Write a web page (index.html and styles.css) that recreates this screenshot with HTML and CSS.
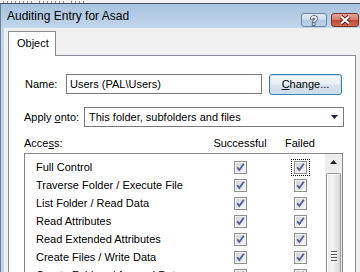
FILE: index.html
```html
<!DOCTYPE html>
<html>
<head>
<meta charset="utf-8">
<link rel="stylesheet" href="styles.css">
</head>
<body>
<svg class="defs" width="0" height="0">
  <defs>
    <linearGradient id="cbfill" x1="0" y1="0" x2="1" y2="1">
      <stop offset="0" stop-color="#d2d2d2"/>
      <stop offset="1" stop-color="#f7f7f7"/>
    </linearGradient>
    <symbol id="cb" viewBox="0 0 13 13">
      <rect x="0.5" y="0.5" width="12" height="12" fill="#f4f4f4" stroke="#8e8f8f"/>
      <rect x="2" y="2" width="9" height="9" fill="url(#cbfill)"/>
      <path d="M3.2 6.2 L5.3 9 L9.8 2.8" fill="none" stroke="#4a5ea0" stroke-width="1.8"/>
    </symbol>
  </defs>
</svg>
<div class="behind"><i class="m1"></i><i class="m2"></i><i class="m3"></i></div>
<div class="window">
  <div class="titlebar">
    <span class="title">Auditing Entry for Asad</span>
    <div class="caption-btns">
      <span class="cbtn help">
        <svg width="24" height="12" viewBox="0 0 24 12"><text x="12" y="10.5" text-anchor="middle" class="qmark">?</text></svg>
      </span>
      <span class="cbtn close">
        <svg width="26" height="12" viewBox="0 0 26 12">
          <path d="M9 2.5 L17 9.5 M17 2.5 L9 9.5" stroke="#5b1c12" stroke-width="4" fill="none"/>
          <path d="M9 2.5 L17 9.5 M17 2.5 L9 9.5" stroke="#fff" stroke-width="2.2" fill="none"/>
        </svg>
      </span>
    </div>
  </div>
  <div class="client">
    <div class="tabs"><div class="tab">Object</div><div class="tab-fill"></div></div>
    <div class="panel">
      <div class="name-row">
        <span class="lbl name-lbl">Name:</span>
        <div class="textbox">Users (PAL\Users)</div>
        <div class="btn"><span><u>C</u>hange...</span></div>
      </div>
      <div class="apply-row">
        <span class="lbl apply-lbl">Apply <u>o</u>nto:</span>
        <div class="combo">
          <span>This folder, subfolders and files</span>
          <svg width="7" height="4" viewBox="0 0 7 4"><path d="M0 0 H7 L3.5 4 Z" fill="#16284e"/></svg>
        </div>
      </div>
      <div class="perm-head">
        <span>Acce<u>s</u>s:</span>
        <span class="col">Successful</span>
        <span class="col">Failed</span>
      </div>
      <div class="list">
        <div class="rows">
          <div class="prow"><span>Full Control</span><span class="col"><svg class="cbx"><use href="#cb"/></svg></span><span class="col"><span class="focus"><svg class="cbx"><use href="#cb"/></svg></span></span></div>
          <div class="prow"><span>Traverse Folder / Execute File</span><span class="col"><svg class="cbx"><use href="#cb"/></svg></span><span class="col"><svg class="cbx"><use href="#cb"/></svg></span></div>
          <div class="prow"><span>List Folder / Read Data</span><span class="col"><svg class="cbx"><use href="#cb"/></svg></span><span class="col"><svg class="cbx"><use href="#cb"/></svg></span></div>
          <div class="prow"><span>Read Attributes</span><span class="col"><svg class="cbx"><use href="#cb"/></svg></span><span class="col"><svg class="cbx"><use href="#cb"/></svg></span></div>
          <div class="prow"><span>Read Extended Attributes</span><span class="col"><svg class="cbx"><use href="#cb"/></svg></span><span class="col"><svg class="cbx"><use href="#cb"/></svg></span></div>
          <div class="prow"><span>Create Files / Write Data</span><span class="col"><svg class="cbx"><use href="#cb"/></svg></span><span class="col"><svg class="cbx"><use href="#cb"/></svg></span></div>
          <div class="prow"><span>Create Folders / Append Data</span><span class="col"><svg class="cbx"><use href="#cb"/></svg></span><span class="col"><svg class="cbx"><use href="#cb"/></svg></span></div>
        </div>
        <div class="vscroll">
          <div class="sb-up"><svg width="7" height="4" viewBox="0 0 7 4"><path d="M0 4 H7 L3.5 0 Z" fill="#222"/></svg></div>
          <div class="thumb">
            <div class="grip"><i></i><i></i><i></i><i></i></div>
          </div>
        </div>
      </div>
    </div>
  </div>
</div>
</body>
</html>
```

FILE: styles.css
```css
html, body {
  margin: 0;
  padding: 0;
}
body {
  width: 360px;
  height: 272px;
  overflow: hidden;
  background: #f4f4f4;
  font-family: "Liberation Sans", Arial, sans-serif;
  font-size: 11px;
  color: #000;
}
.defs {
  display: block;
  width: 0;
  height: 0;
}
u {
  text-decoration: underline;
  text-underline-offset: 1px;
}
.behind {
  height: 3px;
  overflow: hidden;
  background: #f2f2f2;
  display: flex;
  align-items: flex-end;
  gap: 6px;
  padding-left: 3px;
}
.behind i {
  display: block;
  height: 2px;
  background: repeating-linear-gradient(90deg, #8a8a8a 0 1px, transparent 1px 4px);
}
.behind .m1 { width: 30px; }
.behind .m2 { width: 26px; }
.behind .m3 { width: 14px; }
.window {
  height: 300px;
  border-top: 1px solid #46525f;
  border-left: 1px solid #6d7f93;
  background: linear-gradient(#a7c2de, #c2d6eb 24px, #c1d5ea);
}
.titlebar {
  height: 24px;
  display: flex;
  justify-content: space-between;
  align-items: flex-start;
}
.title {
  padding: 5px 0 0 6px;
  font-size: 12px;
  line-height: 15px;
}
.caption-btns {
  display: flex;
  gap: 4px;
  margin-top: 9px;
  margin-right: 1px;
}
.cbtn {
  height: 14px;
  box-sizing: border-box;
  border-radius: 3px;
  display: flex;
  align-items: center;
  justify-content: center;
}
.help {
  width: 26px;
  border: 1px solid #6b84a3;
  background: linear-gradient(#e1ebf6, #c9daec 50%, #b3c9e2 51%, #bed3ea);
}
.close {
  width: 28px;
  border: 1px solid #7c3128;
  background: linear-gradient(#e3a79c, #d47867 50%, #c24631 51%, #cc6a57);
}
.qmark {
  font-family: "Liberation Sans", Arial, sans-serif;
  font-weight: bold;
  font-size: 12px;
  fill: #fff;
  stroke: #3c4f69;
  stroke-width: 1.6px;
  paint-order: stroke;
}
.client {
  margin-left: 3px;
  height: 280px;
  background: #f0f0f0;
  padding: 3px 0 0 4px;
}
.tabs {
  display: flex;
  width: 348px;
}
.tab {
  width: 48px;
  height: 25px;
  box-sizing: border-box;
  border: 1px solid #898c95;
  border-bottom: none;
  background: #fff;
  padding: 5px 0 0 8px;
  line-height: 13px;
}
.tab-fill {
  flex: 1;
  border-bottom: 1px solid #898c95;
}
.panel {
  width: 348px;
  height: 240px;
  box-sizing: border-box;
  border: 1px solid #898c95;
  border-top: none;
  background: #fff;
  padding: 18px 0 0 15px;
}
.lbl {
  line-height: 20px;
}
.name-row {
  display: flex;
  align-items: flex-start;
}
.name-lbl {
  width: 42px;
  padding-left: 1px;
  box-sizing: border-box;
}
.textbox {
  width: 196px;
  height: 20px;
  box-sizing: border-box;
  border: 1px solid #7a7a7a;
  padding-left: 3px;
  line-height: 18px;
  margin-right: 7px;
}
.btn {
  width: 73px;
  height: 21px;
  box-sizing: border-box;
  border: 1px solid #3c7fb1;
  border-radius: 3px;
  background: linear-gradient(#f4f8fb, #e9f0f6 48%, #d8e4ef 52%, #ccdae8);
  box-shadow: inset 0 0 0 1px #c7e4f7;
  display: flex;
  align-items: center;
  justify-content: center;
  line-height: 13px;
}
.apply-row {
  display: flex;
  align-items: flex-start;
  margin-top: 12px;
}
.apply-lbl {
  width: 60px;
}
.combo {
  width: 260px;
  height: 20px;
  box-sizing: border-box;
  border: 1px solid #7a7a7a;
  display: flex;
  align-items: center;
  justify-content: space-between;
  padding: 0 5px 0 4px;
}
.perm-head {
  width: 319px;
  box-sizing: border-box;
  padding: 0 18px 0 0;
  margin-top: 10px;
  margin-bottom: 3px;
  display: grid;
  grid-template-columns: 1fr 50px 50px;
  column-gap: 10px;
  line-height: 13px;
}
.col {
  display: flex;
  justify-content: center;
  align-items: center;
}
.list {
  width: 319px;
  height: 140px;
  box-sizing: border-box;
  border: 1px solid #828790;
  display: flex;
}
.rows {
  flex: 1;
  padding-top: 4px;
}
.prow {
  height: 18px;
  display: grid;
  grid-template-columns: 1fr 50px 50px;
  column-gap: 10px;
  align-items: center;
  padding-left: 11px;
  line-height: 13px;
}
.cbx {
  width: 13px;
  height: 13px;
  display: block;
}
.focus {
  border: 1px dotted #000;
  padding: 1px 2px;
  margin: -2px -3px;
}
.vscroll {
  width: 17px;
  background: #f0f0f0;
  display: flex;
  flex-direction: column;
  align-items: center;
}
.sb-up {
  width: 17px;
  height: 17px;
  display: flex;
  align-items: center;
  justify-content: center;
  background: #ededed;
}
.thumb {
  width: 15px;
  height: 120px;
  margin-top: 2px;
  box-sizing: border-box;
  border: 1px solid #979797;
  border-bottom: none;
  border-radius: 2px 2px 0 0;
  background: linear-gradient(90deg, #e9e9e9, #f6f6f6 40%, #ececec 60%, #d6d6d6);
  box-shadow: inset 1px 1px 0 #fbfbfb;
  display: flex;
  flex-direction: column;
  align-items: center;
  padding-top: 77px;
}
.grip {
  display: flex;
  flex-direction: column;
  gap: 1px;
}
.grip i {
  display: block;
  width: 6px;
  height: 1px;
  background: #5a5a5a;
  border-bottom: 1px solid #fff;
}
```
